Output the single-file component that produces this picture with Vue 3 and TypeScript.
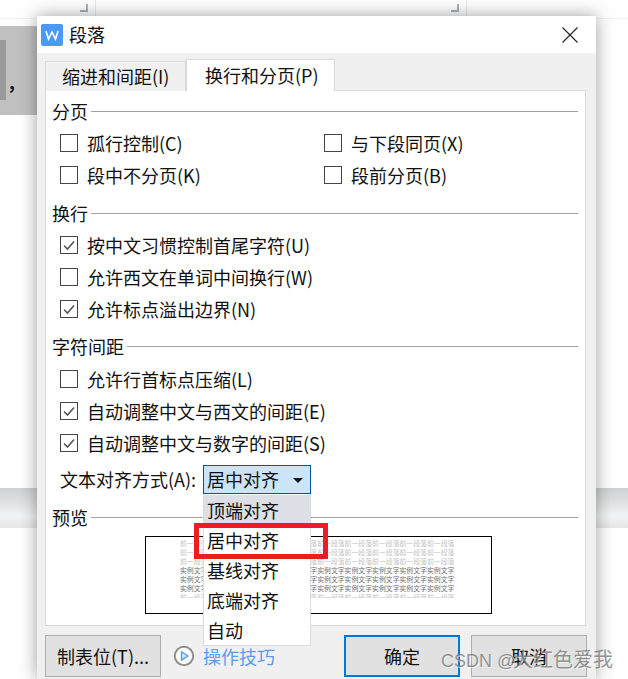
<template>
  <div class="page">
    <!-- document behind the dialog -->
    <div class="doc-top"></div>
    <div class="corner corner-left"></div>
    <div class="corner corner-right"></div>
    <div class="doc-selection"><div class="doc-dark"></div><span class="doc-comma">,</span></div>
    <div class="band band-left"></div>
    <div class="band band-right"></div>

    <div class="dialog">
      <div class="titlebar">
        <svg class="logo" width="22" height="22" viewBox="0 0 22 22">
          <rect width="22" height="22" rx="2" fill="#4c98f6" />
          <polyline points="5,7 7.5,15 11,8 14.5,15 17,7" fill="none" stroke="#fff" stroke-width="1.6" />
        </svg>
        <span class="title">段落</span>
        <svg class="close" width="16" height="16" viewBox="0 0 16 16">
          <path d="M0.5 0.5 L15.5 15.5 M15.5 0.5 L0.5 15.5" stroke="#222" stroke-width="1.1" />
        </svg>
      </div>

      <div class="body">
        <div class="tabs">
          <div class="tab">缩进和间距(I)</div>
          <div class="tab active">换行和分页(P)</div>
        </div>

        <div class="panel">
          <div class="legend"><span>分页</span><i></i></div>
          <div class="grid-rows">
            <label v-for="item in pageOptions" :key="item.text" class="row">
              <span class="box">
                <svg v-if="item.checked" width="16" height="16" viewBox="0 0 16 16">
                  <polyline points="3,8.5 6.5,12 13,4.5" fill="none" stroke="#555" stroke-width="1.6" />
                </svg>
              </span>
              {{ item.text }}
            </label>
          </div>

          <div class="legend second"><span>换行</span><i></i></div>
          <div class="rows">
            <label v-for="item in wrapOptions" :key="item.text" class="row">
              <span class="box">
                <svg v-if="item.checked" width="16" height="16" viewBox="0 0 16 16">
                  <polyline points="3,8.5 6.5,12 13,4.5" fill="none" stroke="#555" stroke-width="1.6" />
                </svg>
              </span>
              {{ item.text }}
            </label>
          </div>

          <div class="legend third"><span>字符间距</span><i></i></div>
          <div class="rows spaced">
            <label v-for="item in spacingOptions" :key="item.text" class="row">
              <span class="box">
                <svg v-if="item.checked" width="16" height="16" viewBox="0 0 16 16">
                  <polyline points="3,8.5 6.5,12 13,4.5" fill="none" stroke="#555" stroke-width="1.6" />
                </svg>
              </span>
              {{ item.text }}
            </label>
          </div>

          <div class="align-row">
            <span class="align-label">文本对齐方式(A):</span>
            <div class="select">
              <span>居中对齐</span>
              <span class="arrow"></span>
              <div class="dropdown">
                <div
                  v-for="(opt, i) in alignOptions"
                  :key="opt"
                  class="option"
                  :class="{ hover: i === 0 }"
                >
                  {{ opt }}
                </div>
                <div class="highlight"></div>
              </div>
            </div>
          </div>

          <div class="legend fourth"><span>预览</span><i></i></div>
          <div class="preview">
            <div class="preview-text">
              <div v-for="(line, i) in previewLines" :key="i" :class="line.kind">{{ line.text }}</div>
            </div>
          </div>
        </div>

        <div class="footer">
          <button class="btn">制表位(T)...</button>
          <div class="tips">
            <svg width="22" height="22" viewBox="0 0 22 22">
              <circle cx="11" cy="11" r="9.2" fill="#fff" stroke="#8e8e8e" stroke-width="2" />
              <path d="M8.5 6.8 L15 11 L8.5 15.2 Z" fill="#dbe9fb" stroke="#5b9bf0" stroke-width="1.4" />
            </svg>
            <span>操作技巧</span>
          </div>
          <button class="btn primary">确定</button>
          <button class="btn cancel">取消</button>
        </div>
      </div>
    </div>

    <div class="watermark"><span class="wm-latin">CSDN @</span>大红色爱我</div>
  </div>
</template>

<script setup lang="ts">
interface TOption {
  text: string;
  checked: boolean;
}

const pageOptions: TOption[] = [
  { text: '孤行控制(C)', checked: false },
  { text: '与下段同页(X)', checked: false },
  { text: '段中不分页(K)', checked: false },
  { text: '段前分页(B)', checked: false },
];

const wrapOptions: TOption[] = [
  { text: '按中文习惯控制首尾字符(U)', checked: true },
  { text: '允许西文在单词中间换行(W)', checked: false },
  { text: '允许标点溢出边界(N)', checked: true },
];

const spacingOptions: TOption[] = [
  { text: '允许行首标点压缩(L)', checked: false },
  { text: '自动调整中文与西文的间距(E)', checked: true },
  { text: '自动调整中文与数字的间距(S)', checked: true },
];

const alignOptions = ['顶端对齐', '居中对齐', '基线对齐', '底端对齐', '自动'];

const before = '前一段落'.repeat(10);
const sample = '实例文字'.repeat(10);

const previewLines = [
  { kind: 'faint', text: before },
  { kind: 'faint', text: before },
  { kind: 'faint', text: before },
  { kind: 'dark', text: sample },
  { kind: 'dark', text: sample },
  { kind: 'dark', text: sample },
  { kind: 'faint', text: before },
];
</script>

<style>
html,
body {
  margin: 0;
  background: #fff;
}
</style>

<style scoped>
.page {
  position: relative;
  width: 628px;
  height: 679px;
  overflow: hidden;
  background: #fefefe;
  font-family: "Noto Sans CJK SC", "Liberation Sans", sans-serif;
  font-size: 18px;
  color: #111;
}

.doc-top {
  position: absolute;
  left: 0;
  right: 0;
  top: 0;
  height: 18px;
  background:
    linear-gradient(#e8e8e8, #e8e8e8) 95px 0 / 1px 100% no-repeat,
    linear-gradient(#e8e8e8, #e8e8e8) 466px 0 / 1px 100% no-repeat;
  border-bottom: 1px solid #f2f2f2;
}

.corner {
  position: absolute;
  top: 4px;
  width: 6px;
  height: 6px;
  border-right: 2px solid #a9b0b8;
  border-bottom: 2px solid #a9b0b8;
}

.corner-left {
  left: 80px;
}

.corner-right {
  left: 451px;
}

.doc-selection {
  position: absolute;
  left: 0;
  top: 26px;
  width: 37px;
  height: 89px;
  background: #c0c0c0;
}

.doc-dark {
  position: absolute;
  left: 0;
  top: 14px;
  width: 6px;
  height: 60px;
  background: #9a9a9a;
}

.doc-comma {
  position: absolute;
  left: 9px;
  top: 43px;
  font-size: 18px;
  font-weight: 700;
  line-height: 24px;
}

.band {
  position: absolute;
  top: 488px;
  height: 40px;
  background: linear-gradient(#cfd0d1, #e4e5e6 45%, #f3f4f5 70%, #e6e6e6);
}

.band-left {
  left: 0;
  width: 37px;
}

.band-right {
  left: 595px;
  width: 33px;
}

.dialog {
  position: absolute;
  left: 37px;
  top: 16px;
  width: 559px;
  height: 663px;
  display: flex;
  flex-direction: column;
  background: #f0f0f0;
  box-shadow: 0 0 16px rgba(0, 0, 0, 0.38);
}

.titlebar {
  height: 37px;
  flex: none;
  display: flex;
  align-items: center;
  padding: 0 18px 0 4px;
  background: #fff;
}

.logo {
  flex: none;
}

.title {
  margin-left: 6px;
  flex: 1;
  line-height: 34px;
  margin-bottom: 2px;
}

.close {
  margin-top: 1px;
}

.body {
  flex: 1;
  padding: 7px 9px 0 8px;
  display: flex;
  flex-direction: column;
}

.tabs {
  display: flex;
  align-items: flex-end;
  height: 31px;
  position: relative;
  z-index: 1;
  margin-bottom: -1px;
}

.tab {
  height: 30px;
  box-sizing: border-box;
  width: 141px;
  padding-left: 16px;
  line-height: 29px;
  background: #f0f0f0;
  border: 1px solid #d9d9d9;
  border-bottom: none;
}

.tab.active {
  width: 149px;
  height: 32px;
  padding-left: 18px;
  line-height: 31px;
  background: #fff;
  border-bottom: none;
}

.panel {
  width: 541px;
  height: 536px;
  box-sizing: border-box;
  padding: 8px 7px 0 6px;
  background: #fff;
  border: 1px solid #d9d9d9;
}

.legend {
  display: flex;
  align-items: center;
  height: 24px;
  line-height: 24px;
}

.legend i {
  flex: 1;
  height: 1px;
  margin-left: 3px;
  background: #a0a0a0;
}

.second {
  margin-top: 10px;
}

.third {
  margin-top: 9px;
}

.fourth {
  margin-top: 10px;
}

.grid-rows {
  display: grid;
  grid-template-columns: 264px 1fr;
  margin-top: 4px;
  padding-left: 8px;
}

.rows {
  margin-top: 4px;
  padding-left: 8px;
}

.spaced {
  margin-top: 5px;
}

.row {
  display: flex;
  align-items: center;
  height: 32px;
  white-space: nowrap;
}

.box {
  flex: none;
  width: 18px;
  height: 18px;
  box-sizing: border-box;
  display: flex;
  align-items: center;
  justify-content: center;
  margin-right: 9px;
  border: 1px solid #444;
  background: #fff;
}

.align-row {
  display: flex;
  align-items: center;
  height: 32px;
  margin-top: 4px;
  padding-left: 8px;
}

.align-label {
  width: 143px;
  white-space: nowrap;
}

.select {
  position: relative;
  z-index: 2;
  width: 108px;
  height: 29px;
  box-sizing: border-box;
  padding-left: 3px;
  display: flex;
  align-items: center;
  background: #cce4f7;
  border: 1px solid #005499;
}

.arrow {
  position: absolute;
  right: 7px;
  top: 12px;
  border-left: 5px solid transparent;
  border-right: 5px solid transparent;
  border-top: 5px solid #111;
}

.dropdown {
  position: absolute;
  left: -1px;
  top: 28px;
  width: 108px;
  box-sizing: border-box;
  padding-top: 1px;
  background: #fff;
  border-right: 1px solid #dcdcdc;
  border-bottom: 1px solid #dcdcdc;
  border-left: 1px solid #dcdcdc;
}

.option {
  height: 30px;
  line-height: 30px;
  padding-left: 3px;
}

.option.hover {
  background: #dcdfe6;
}

.highlight {
  position: absolute;
  left: -10px;
  top: 29px;
  width: 134px;
  height: 36px;
  box-sizing: border-box;
  border: 5px solid #ed1c24;
}

.preview {
  width: 347px;
  height: 78px;
  box-sizing: border-box;
  margin: 7px 0 0 93px;
  padding: 2px 0 0 34px;
  background: #fff;
  border: 1px solid #000;
}

.preview-text {
  width: 276px;
  height: 59px;
  overflow: hidden;
  font-size: 6.875px;
  line-height: 9px;
  white-space: nowrap;
}

.faint {
  color: #c4c4c4;
}

.dark {
  color: #6e6e6e;
}

.footer {
  display: flex;
  align-items: center;
  margin-top: 9px;
}

.btn {
  flex: none;
  width: 116px;
  height: 42px;
  box-sizing: border-box;
  padding: 0;
  font: inherit;
  color: #111;
  background: #e1e1e1;
  border: 1px solid #adadad;
}

.btn.primary {
  border: 2px solid #0078d7;
}

.btn.cancel {
  margin-left: 11px;
}

.tips {
  flex: none;
  width: 183px;
  box-sizing: border-box;
  display: flex;
  align-items: center;
  padding-left: 12px;
  color: #5b9bf0;
}

.tips svg {
  margin-right: 8px;
}

.watermark {
  position: absolute;
  left: 441px;
  top: 645px;
  font-size: 20px;
  line-height: 28px;
  white-space: nowrap;
  color: rgba(110, 110, 110, 0.72);
  text-shadow: 1px 1px 0 rgba(255, 255, 255, 0.6);
}

.wm-latin {
  display: inline-block;
  width: 72px;
  font-family: "Liberation Sans", sans-serif;
  font-size: 18px;
}
</style>
